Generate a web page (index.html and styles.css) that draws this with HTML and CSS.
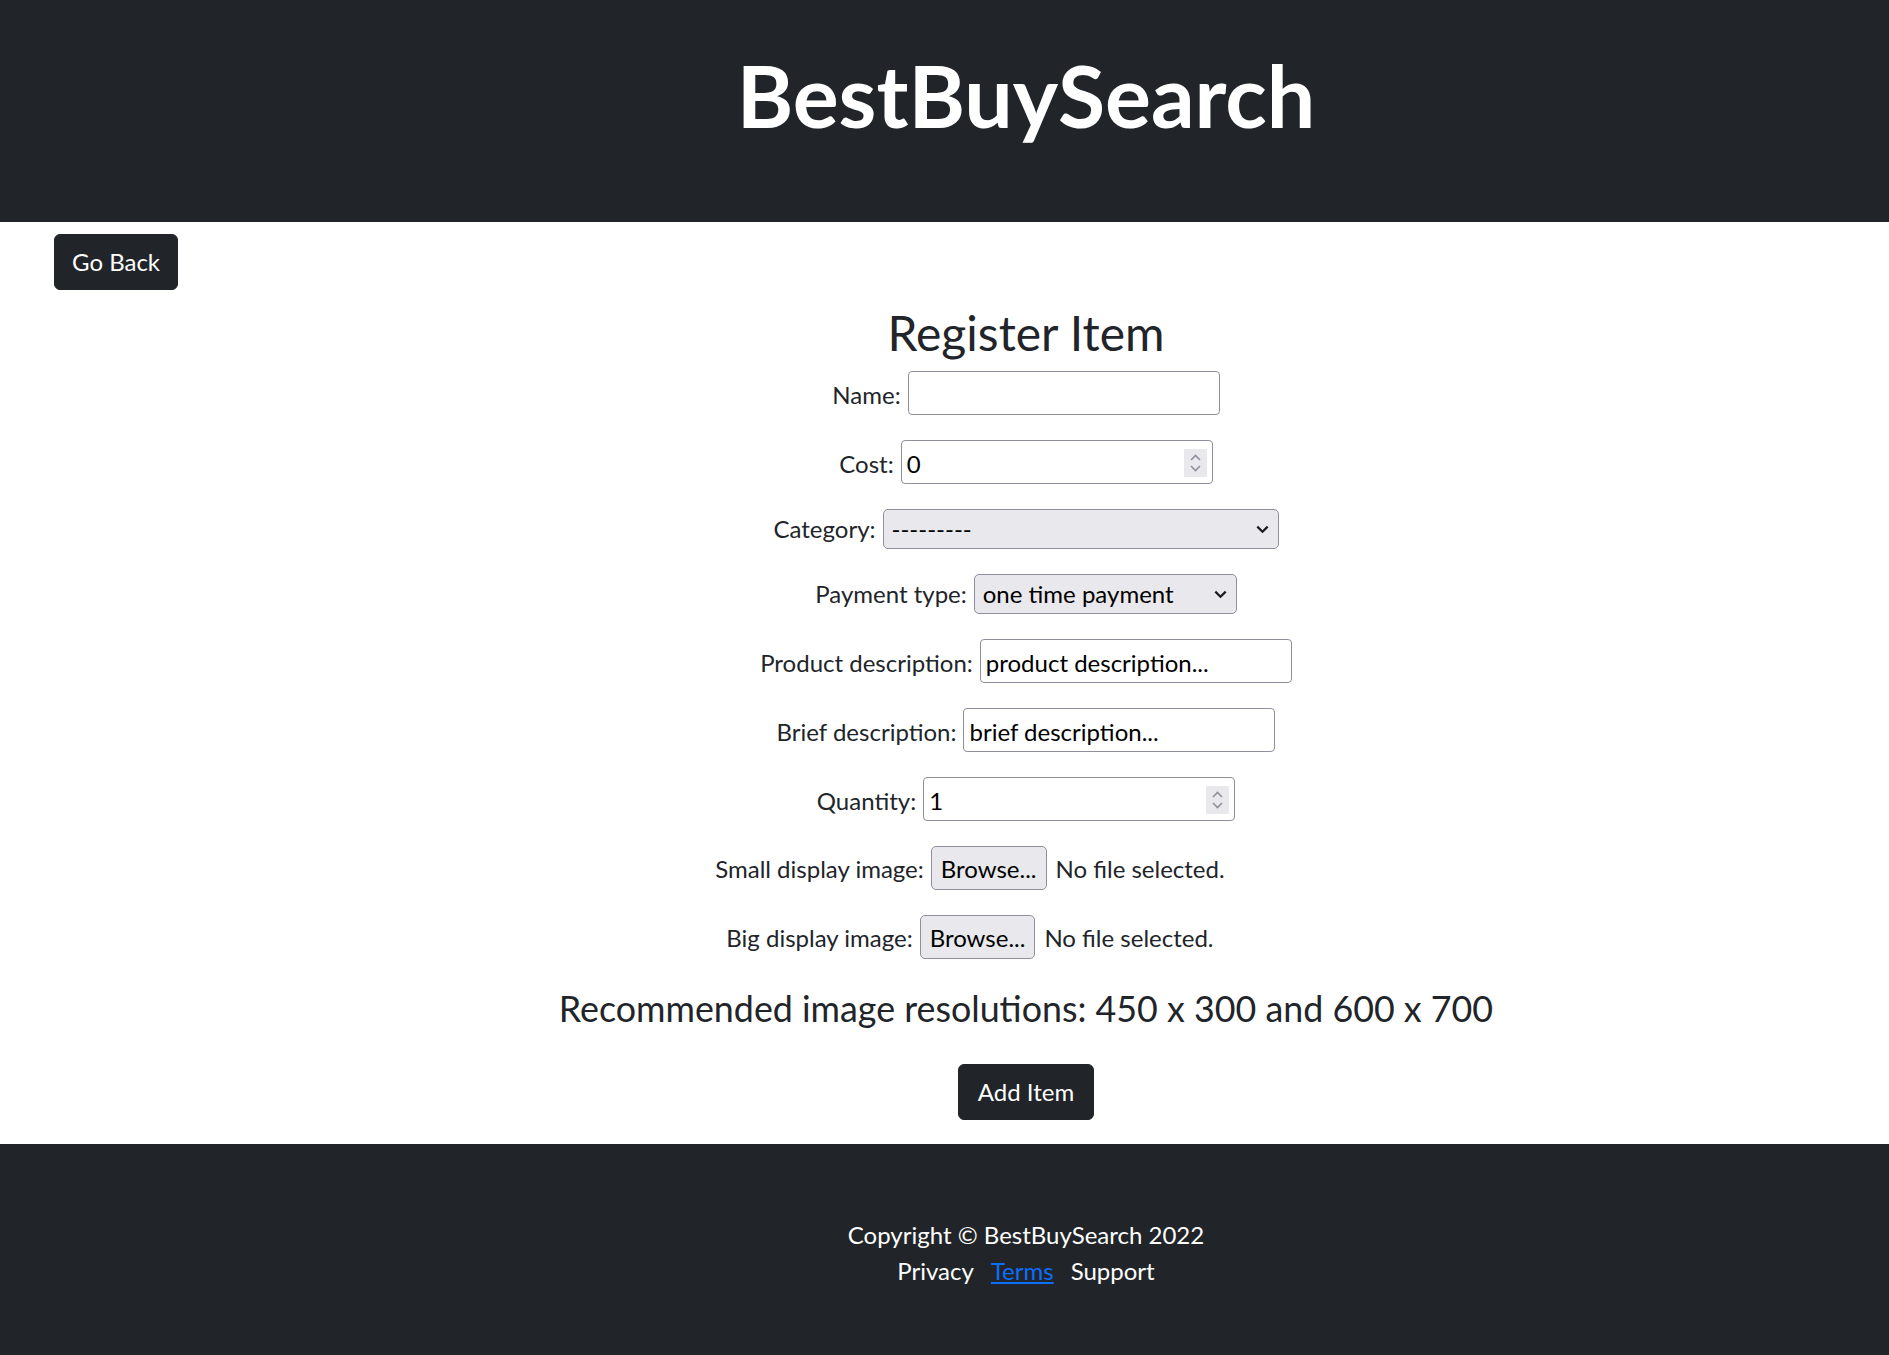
FILE: index.html
```html
<!DOCTYPE html>
<html lang="en">
<head>
<meta charset="utf-8">
<title>BestBuySearch - Register Item</title>
<link rel="stylesheet" href="styles.css">
</head>
<body>
<header class="site-header">
  <h1 class="brand">BestBuySearch</h1>
</header>
<main class="page">
  <div class="back-row">
    <a class="btn btn-dark btn-back" href="#">Go Back</a>
  </div>
  <section class="register">
    <h2 class="register-title">Register Item</h2>
    <form class="form">
      <div class="field">
        <label class="field-label" for="name">Name:</label>
        <input class="text-input" id="name" type="text" value="">
      </div>
      <div class="field">
        <label class="field-label" for="cost">Cost:</label>
        <span class="number-input">
          <input class="number-field" id="cost" type="text" value="0">
          <svg class="spinner" width="23" height="28" viewBox="0 0 23 28" aria-hidden="true">
            <rect width="23" height="28" fill="#e9e9ed"/>
            <path d="M7 11 L11.5 6.5 L16 11" fill="none" stroke="#8f8f9d" stroke-width="1.6"/>
            <path d="M7 17 L11.5 21.5 L16 17" fill="none" stroke="#8f8f9d" stroke-width="1.6"/>
          </svg>
        </span>
      </div>
      <div class="field">
        <label class="field-label" for="category">Category:</label>
        <span class="select-box select-wide">
          <select class="select" id="category"><option>---------</option></select>
          <svg class="chevron" width="13" height="9" viewBox="0 0 13 9" aria-hidden="true">
            <path d="M1.3 1.6 L6.5 6.8 L11.7 1.6" fill="none" stroke="#1c1b22" stroke-width="2.2"/>
          </svg>
        </span>
      </div>
      <div class="field">
        <label class="field-label" for="payment">Payment type:</label>
        <span class="select-box select-narrow">
          <select class="select" id="payment"><option>one time payment</option></select>
          <svg class="chevron" width="13" height="9" viewBox="0 0 13 9" aria-hidden="true">
            <path d="M1.3 1.6 L6.5 6.8 L11.7 1.6" fill="none" stroke="#1c1b22" stroke-width="2.2"/>
          </svg>
        </span>
      </div>
      <div class="field">
        <label class="field-label" for="pdesc">Product description:</label>
        <input class="text-input" id="pdesc" type="text" value="product description...">
      </div>
      <div class="field">
        <label class="field-label" for="bdesc">Brief description:</label>
        <input class="text-input" id="bdesc" type="text" value="brief description...">
      </div>
      <div class="field">
        <label class="field-label" for="qty">Quantity:</label>
        <span class="number-input">
          <input class="number-field" id="qty" type="text" value="1">
          <svg class="spinner" width="23" height="28" viewBox="0 0 23 28" aria-hidden="true">
            <rect width="23" height="28" fill="#e9e9ed"/>
            <path d="M7 11 L11.5 6.5 L16 11" fill="none" stroke="#8f8f9d" stroke-width="1.6"/>
            <path d="M7 17 L11.5 21.5 L16 17" fill="none" stroke="#8f8f9d" stroke-width="1.6"/>
          </svg>
        </span>
      </div>
      <div class="field">
        <span class="field-label">Small display image:</span>
        <span class="file-input">
          <button class="browse" type="button">Browse...</button>
          <span class="file-status">No file selected.</span>
        </span>
      </div>
      <div class="field">
        <span class="field-label">Big display image:</span>
        <span class="file-input">
          <button class="browse" type="button">Browse...</button>
          <span class="file-status">No file selected.</span>
        </span>
      </div>
    </form>
    <p class="hint">Recommended image resolutions: 450 x 300 and 600 x 700</p>
    <div class="submit-row">
      <button class="btn btn-dark" type="button">Add Item</button>
    </div>
  </section>
</main>
<footer class="site-footer">
  <p class="copyright">Copyright © BestBuySearch 2022</p>
  <nav class="footer-links">
    <a class="footer-link" href="#">Privacy</a>
    <a class="footer-link footer-link-active" href="#">Terms</a>
    <a class="footer-link" href="#">Support</a>
  </nav>
</footer>
</body>
</html>
```

FILE: styles.css
```css
* {
  box-sizing: border-box;
}

html, body {
  margin: 0;
  padding: 0;
}

body {
  font-family: "Lato", "Open Sans", sans-serif;
  font-size: 24px;
  line-height: 1.5;
  color: #212529;
  background: #fff;
  width: 1889px;
}

/* Header */
.site-header {
  background: #212529;
  height: 222px;
  padding-top: 43px;
  padding-left: 163px;
}

.brand {
  margin: 0;
  font-size: 86px;
  font-weight: 700;
  line-height: 1.2;
  color: #fff;
  text-align: center;
}

/* Main */
.page {
  padding-top: 12px;
}

.back-row {
  padding-left: 54px;
  display: flex;
}

.btn {
  display: inline-flex;
  align-items: center;
  justify-content: center;
  height: 56px;
  padding: 0 19px;
  border: 1px solid #212529;
  border-radius: 6px;
  font-family: inherit;
  font-size: 24px;
  line-height: 1.5;
  text-decoration: none;
  cursor: pointer;
}

.btn-back {
  padding: 0 17px;
}

.btn-dark {
  background: #212529;
  color: #fff;
}

.register {
  padding-left: 163px;
  text-align: center;
}

.register-title {
  margin: 13.5px 0 0;
  font-size: 48px;
  font-weight: 400;
  line-height: 1.2;
  color: #212529;
}

.form {
  margin-top: 10px;
  display: flex;
  flex-direction: column;
  align-items: center;
  gap: 25px;
}

.field {
  display: flex;
  justify-content: center;
  align-items: baseline;
  gap: 7px;
}

.field-label {
  font-size: 24px;
  line-height: 1.5;
  color: #212529;
}

.text-input {
  width: 312px;
  height: 44px;
  padding: 2px 5px 0;
  border: 1px solid #8f8f9d;
  border-radius: 4px;
  font-family: inherit;
  font-size: 24px;
  color: #000;
  background: #fff;
  outline: none;
}

.number-input {
  display: inline-flex;
  align-items: center;
  width: 312px;
  height: 44px;
  padding: 0 5px 0 5px;
  border: 1px solid #8f8f9d;
  border-radius: 4px;
  background: #fff;
}

.number-field {
  flex: 1;
  min-width: 0;
  padding: 2px 0 0;
  border: none;
  outline: none;
  background: transparent;
  font-family: inherit;
  font-size: 24px;
  color: #000;
}

.spinner {
  flex: none;
  display: block;
  margin-top: 1px;
}

.select-box {
  display: inline-flex;
  align-items: center;
  height: 40px;
  padding: 1px 9px 0 8px;
  border: 1px solid #8f8f9d;
  border-radius: 5px;
  background: #e9e9ed;
}

.select-wide {
  width: 396px;
}

.select-narrow {
  width: 263px;
}

.select {
  flex: 1;
  min-width: 0;
  appearance: none;
  -webkit-appearance: none;
  border: none;
  outline: none;
  background: transparent;
  padding: 0;
  margin: 0;
  font-family: inherit;
  font-size: 24px;
  line-height: 1.2;
  color: #000;
}

.chevron {
  flex: none;
  display: block;
  margin-top: -1px;
}

.file-input {
  display: inline-flex;
  align-items: baseline;
  gap: 9px;
  width: 406px;
  text-align: left;
}

.browse {
  height: 44px;
  padding: 1px 9px 0;
  border: 1px solid #8f8f9d;
  border-radius: 5px;
  background: #e9e9ed;
  font-family: inherit;
  font-size: 24px;
  color: #000;
}

.file-status {
  color: #212529;
}

.hint {
  margin: 28.5px 0 0;
  font-size: 35.8px;
  line-height: 1.2;
  color: #212529;
}

.submit-row {
  margin-top: 33.5px;
  display: flex;
  justify-content: center;
  padding-bottom: 24px;
}

/* Footer */
.site-footer {
  background: #212529;
  color: #fff;
  height: 211px;
  padding-top: 73px;
  padding-left: 163px;
  text-align: center;
}

.copyright {
  margin: 0;
  line-height: 1.5;
}

.footer-links {
  display: flex;
  justify-content: center;
  gap: 17px;
  line-height: 1.5;
}

.footer-link {
  color: #fff;
  text-decoration: none;
}

.footer-link-active {
  color: #0d6efd;
  text-decoration: underline;
}
```
